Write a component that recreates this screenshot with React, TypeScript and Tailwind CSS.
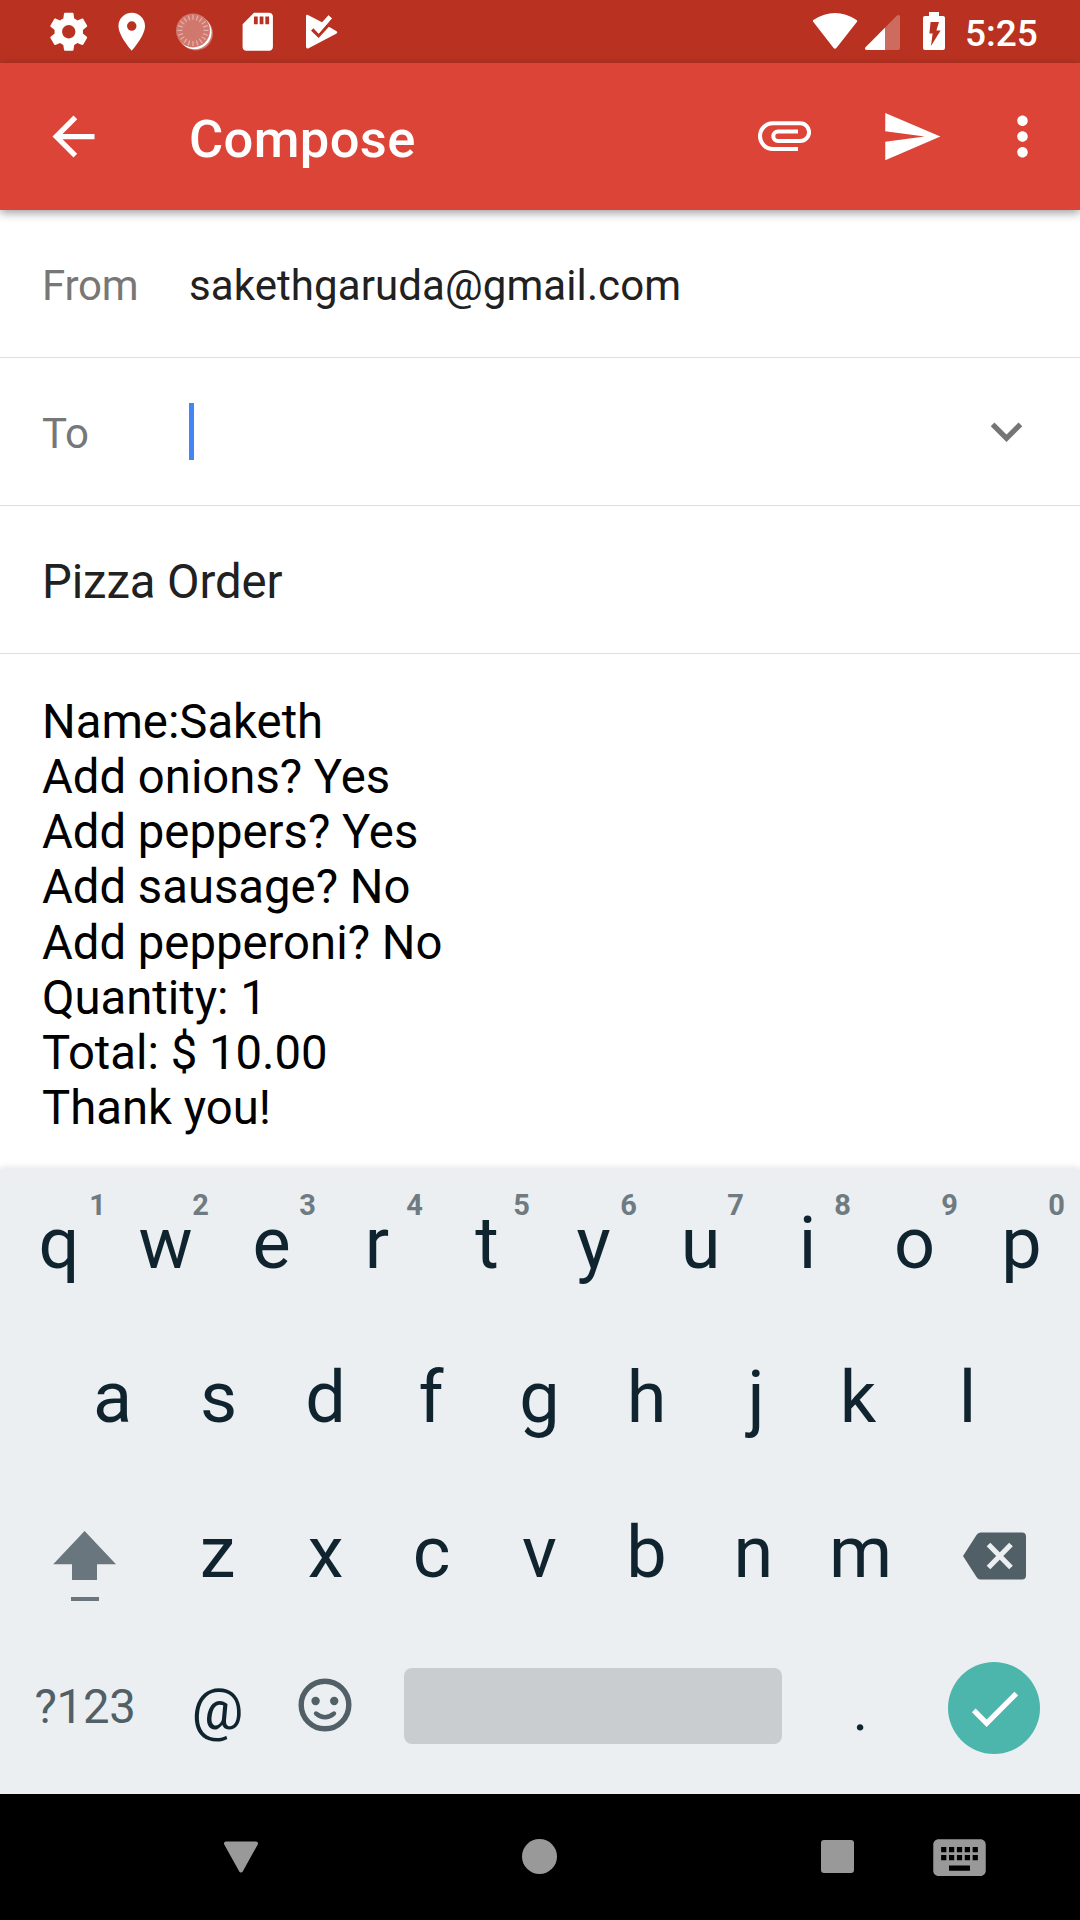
import React from "react";

function Icon({ d, size, className }: { d: string; size: string; className?: string }) {
  return (
    <svg viewBox="0 0 24 24" fill="currentColor" className={`block shrink-0 ${size} ${className ?? ""}`}>
      <path d={d} />
    </svg>
  );
}

const GEAR =
  "M19.43 12.98c.04-.32.07-.64.07-.98s-.03-.66-.07-.98l2.11-1.65c.19-.15.24-.42.12-.64l-2-3.46c-.12-.22-.39-.3-.61-.22l-2.49 1c-.52-.4-1.08-.73-1.69-.98l-.38-2.65C14.46 2.18 14.25 2 14 2h-4c-.25 0-.46.18-.49.42l-.38 2.65c-.61.25-1.17.59-1.69.98l-2.49-1c-.23-.09-.49 0-.61.22l-2 3.46c-.13.22-.07.49.12.64l2.11 1.65c-.04.32-.07.65-.07.98s.03.66.07.98l-2.11 1.65c-.19.15-.24.42-.12.64l2 3.46c.12.22.39.3.61.22l2.49-1c.52.4 1.08.73 1.69.98l.38 2.65c.03.24.24.42.49.42h4c.25 0 .46-.18.49-.42l.38-2.65c.61-.25 1.17-.59 1.69-.98l2.49 1c.23.09.49 0 .61-.22l2-3.46c.12-.22.07-.49-.12-.64l-2.11-1.65zM12 15.5c-1.93 0-3.5-1.57-3.5-3.5s1.57-3.5 3.5-3.5 3.5 1.57 3.5 3.5-1.57 3.5-3.5 3.5z";
const PLACE =
  "M12 2C8.13 2 5 5.13 5 9c0 5.25 7 13 7 13s7-7.75 7-13c0-3.87-3.13-7-7-7zm0 9.5a2.5 2.5 0 0 1 0-5 2.5 2.5 0 0 1 0 5z";
const SD =
  "M18 2h-8L4.02 8 4 20c0 1.1.9 2 2 2h12c1.1 0 2-.9 2-2V4c0-1.1-.9-2-2-2zm-6 6h-2V4h2v4zm3 0h-2V4h2v4zm3 0h-2V4h2v4z";
const BACK = "M20 11H7.83l5.59-5.59L12 4l-8 8 8 8 1.41-1.41L7.83 13H20v-2z";
const SEND = "M2.01 21L23 12 2.01 3 2 10l15 2-15 2z";
const MORE =
  "M12 8c1.1 0 2-.9 2-2s-.9-2-2-2-2 .9-2 2 .9 2 2 2zm0 2c-1.1 0-2 .9-2 2s.9 2 2 2 2-.9 2-2-.9-2-2-2zm0 6c-1.1 0-2 .9-2 2s.9 2 2 2 2-.9 2-2-.9-2-2-2z";
const EXPAND = "M16.59 8.59L12 13.17 7.41 8.59 6 10l6 6 6-6z";
const CHECK = "M9 16.17L4.83 12l-1.42 1.41L9 19 21 7l-1.41-1.41z";
const KEYBOARD =
  "M20 5H4c-1.1 0-1.99.9-1.99 2L2 17c0 1.1.9 2 2 2h16c1.1 0 2-.9 2-2V7c0-1.1-.9-2-2-2zm-9 3h2v2h-2V8zm0 3h2v2h-2v-2zM8 8h2v2H8V8zm0 3h2v2H8v-2zm-1 2H5v-2h2v2zm0-3H5V8h2v2zm9 7H8v-2h8v2zm0-4h-2v-2h2v2zm0-3h-2V8h2v2zm3 3h-2v-2h2v2zm0-3h-2V8h2v2z";

const TICKS = Array.from({ length: 20 }, (_, i) => i * 18);

function StatusBar() {
  return (
    <div className="flex h-[63px] items-start justify-between bg-[#b93221] text-white">
      <div className="ml-[45.5px] flex gap-[17.5px] pt-[8.5px]">
        <Icon d={GEAR} size="size-[45.5px]" />
        <Icon d={PLACE} size="size-[45.5px]" />
        <svg viewBox="0 0 45.5 45.5" className="block size-[45.5px]">
          <circle cx="23.9" cy="24.4" r="17" fill="#fff" fillOpacity="0.35" />
          <circle cx="22.6" cy="23.2" r="17" fill="#fff" />
          <circle cx="21" cy="21.4" r="17" fill="#d1786e" />
          {TICKS.map((a) => (
            <line
              key={a}
              x1="21"
              y1="5.8"
              x2="21"
              y2="10.8"
              stroke="#e5b0aa"
              strokeWidth="1.2"
              transform={`rotate(${a} 21 21.4)`}
            />
          ))}
        </svg>
        <Icon d={SD} size="size-[45.5px]" />
        <svg viewBox="0 0 45.5 45.5" className="block size-[45.5px]">
          <path
            d="M8 7.2Q8 5.2 10 6L24 13.2L30.6 6.2L33.8 9.6L30.6 13L29.6 17L38.6 22.2Q40 23.2 38.6 24.4L10.6 39.2Q8 40 8 37.4Z"
            fill="#fff"
          />
          <path d="M14.2 20.5L20.6 26.8L31.5 14.6" fill="none" stroke="#b93221" strokeWidth="3.2" />
          <path d="M17.6 17.4L20.8 21.4L32.2 7.9" fill="none" stroke="#fff" strokeWidth="4.4" />
        </svg>
      </div>
      <div className="mr-[43px] flex items-start">
        <svg viewBox="812 0 136 63" className="block h-[63px] w-[136px]">
          <path
            d="M813.2 21.8Q812.2 20.8 813.4 19.9Q835 6 856.6 19.9Q857.8 20.8 857 21.8L836.6 47.8Q835 49.8 833.4 47.8Z"
            fill="#fff"
          />
          <path d="M865.6 47.2L897 15.6Q900 13.8 900 17V48.2Q900 50 898 50H866.4Q864 49 865.6 47.2Z" fill="#fff" fillOpacity="0.28" />
          <path d="M865.6 47.2L885 27.7V50H866.4Q864 49 865.6 47.2Z" fill="#fff" />
          <path d="M929 12H939V16H943Q945 16 945 18V48Q945 50 943 50H925Q923 50 923 48V18Q923 16 925 16H929Z" fill="#fff" />
          <path d="M930.6 22H939L936.4 30.6H940.6L931 46L932.6 33.6H929.4Z" fill="#b93221" />
        </svg>
        <span className="mt-[12px] ml-[17px] w-[72px] whitespace-nowrap text-[37px] leading-[44px] font-medium">5:25</span>
      </div>
    </div>
  );
}

function AppBar() {
  return (
    <header className="relative z-10 flex h-[147px] items-center bg-[#db4437] text-white shadow-[0_3px_9px_rgba(0,0,0,0.38)]">
      <Icon d={BACK} size="size-[63px]" className="ml-[42px]" />
      <h1 className="ml-[84px] flex-1 pt-[5px] text-[52.5px] leading-[62px] font-medium tracking-[0.35px]">Compose</h1>
      <svg viewBox="0 0 53 31" className="mr-[69px] block h-[31px] w-[53px]">
        <path
          d="M40 28H14.9A12.9 12.9 0 0 1 14.9 2.2H42.2A8.9 8.9 0 0 1 42.2 20H20A4.6 4.6 0 0 1 20 10.6H40"
          fill="none"
          stroke="#fff"
          strokeWidth="4"
        />
      </svg>
      <Icon d={SEND} size="size-[63px]" />
      <Icon d={MORE} size="size-[63px]" className="mr-[26px] ml-[48px]" />
    </header>
  );
}

function Fields() {
  return (
    <>
      <div className="flex h-[148px] items-center border-b border-[#dedede] pt-[4px] pl-[42px] text-[42px] leading-[50px]">
        <span className="w-[147px] tracking-[-0.2px] text-[#777]">From</span>
        <span className="tracking-[0.09px] text-[#212121]">sakethgaruda@gmail.com</span>
      </div>
      <div className="flex h-[148px] items-center border-b border-[#dedede] pl-[42px] text-[42px] leading-[50px]">
        <span className="w-[147px] pt-[4px] text-[#777]">To</span>
        <span className="h-[57px] w-[5px] bg-[#4285f4]" />
        <Icon d={EXPAND} size="size-[63px]" className="mr-[42px] ml-auto text-[#757575]" />
      </div>
      <div className="flex h-[148px] items-center border-b border-[#dedede] pt-[5px] pl-[42px] text-[47.25px] leading-[56px] tracking-[-0.1px] text-[#212121]">
        Pizza Order
      </div>
    </>
  );
}

const BODY = [
  "Name:Saketh",
  "Add onions? Yes",
  "Add peppers? Yes",
  "Add sausage? No",
  "Add pepperoni? No",
  "Quantity: 1",
  "Total: $ 10.00",
  "Thank you!",
];

const NUDGE: Record<string, string> = {
  q: "pl-[1px]",
  e: "pr-[2px]",
  r: "pr-[5px]",
  t: "pl-[1px]",
  a: "pl-[2px]",
  f: "pr-[3px]",
  j: "pl-[5px]",
  k: "pr-[5px]",
  z: "pr-[2px]",
  c: "pr-[2px]",
};

function Key({ label, hint }: { label: string; hint?: string }) {
  return (
    <div className={`relative flex w-[107px] justify-center ${NUDGE[label] ?? ""}`}>
      <span className="text-[72px] leading-[84px] text-[#0f242e]">{label}</span>
      {hint && (
        <span
          className={`absolute -top-[14px] text-[29px] leading-[34px] font-bold text-[#6f7b81] ${
            hint === "1" ? "right-[6px]" : "right-[10px]"
          }`}
        >
          {hint}
        </span>
      )}
    </div>
  );
}

function Keyboard() {
  return (
    <div className="h-[625px] bg-[#ebeff2] shadow-[0_-2px_6px_rgba(0,0,0,0.1)]">
      <div className="flex h-[154px] pt-[33px] pl-[5px]">
        {"qwertyuiop".split("").map((c, i) => (
          <Key key={c} label={c} hint={String((i + 1) % 10)} />
        ))}
      </div>
      <div className="flex h-[155px] pt-[33px] pl-[58px]">
        {"asdfghjkl".split("").map((c) => (
          <Key key={c} label={c} />
        ))}
      </div>
      <div className="flex h-[155px] pt-[33px]">
        <svg viewBox="0 0 64 72" className="mt-[19px] mr-[48px] ml-[53px] block h-[72px] w-[64px]">
          <path d="M31.6 1L63 34.2H44V50H19V34.2H0.2Z" fill="#69767d" />
          <rect x="18" y="67" width="28" height="4" fill="#69767d" />
        </svg>
        {"zxcvbnm".split("").map((c) => (
          <Key key={c} label={c} />
        ))}
        <svg viewBox="0 0 63 48" className="mt-[21px] ml-[49px] block h-[48px] w-[63px]">
          <path d="M17.5 0.5H59Q63 0.5 63 4.5V43.5Q63 47.5 59 47.5H17.5Q15 47.5 13.5 45L0 24L13.5 3Q15 0.5 17.5 0.5Z" fill="#515f67" />
          <path d="M25.5 12.5L48 35.5M48 12.5L25.5 35.5" stroke="#ebeff2" strokeWidth="5.2" />
        </svg>
      </div>
      <div className="flex h-[161px] items-start">
        <span className="mt-[46px] w-[165px] pl-[5px] text-center text-[47.25px] leading-[56px] tracking-[-0.2px] text-[#515f67]">?123</span>
        <span className="mt-[42px] w-[107px] pr-[2px] text-center text-[58px] leading-[68px] text-[#0f242e]">@</span>
        <svg viewBox="0 0 54 54" className="mt-[45px] ml-[26px] block size-[54px]">
          <circle cx="27" cy="27" r="23.8" fill="none" stroke="#515f67" strokeWidth="5.4" />
          <circle cx="17.6" cy="23" r="4.2" fill="#515f67" />
          <circle cx="36.2" cy="23" r="4.2" fill="#515f67" />
          <path d="M18 35.5Q27 43 36 35.5" fill="none" stroke="#515f67" strokeWidth="4.4" strokeLinecap="round" />
        </svg>
        <div className="mt-[35px] ml-[52px] h-[76px] w-[378px] rounded-[8px] bg-[#c9cdd0]" />
        <span className="mt-[43px] ml-[25px] w-[107px] text-center text-[58px] leading-[68px] text-[#0f242e]">.</span>
        <div className="mt-[29px] ml-[34px] flex size-[92px] items-center justify-center rounded-full bg-[#4db6ac]">
          <Icon d={CHECK} size="size-[63px]" className="text-white" />
        </div>
      </div>
    </div>
  );
}

function NavBar() {
  return (
    <nav className="flex h-[126px] items-center bg-black pb-px text-[#999]">
      <svg viewBox="0 0 36 34" className="ml-[223px] block h-[34px] w-[36px]">
        <path d="M3 3.5H33L18 30.5Z" fill="currentColor" stroke="currentColor" strokeWidth="4" strokeLinejoin="round" />
      </svg>
      <div className="ml-[263px] size-[35px] rounded-full bg-[#999]" />
      <div className="ml-[264px] size-[33px] rounded-[3px] bg-[#999]" />
      <Icon d={KEYBOARD} size="size-[63px]" className="mt-[2px] ml-[74px]" />
    </nav>
  );
}

export default function App() {
  return (
    <div className="flex h-[1920px] w-[1080px] flex-col overflow-hidden bg-white font-['Roboto',sans-serif]">
      <StatusBar />
      <AppBar />
      <Fields />
      <div className="flex-1 pt-[41px] pl-[42px] text-[47.25px] leading-[55.14px] text-black">
        {BODY.map((line) => (
          <p key={line}>{line}</p>
        ))}
      </div>
      <Keyboard />
      <NavBar />
    </div>
  );
}
